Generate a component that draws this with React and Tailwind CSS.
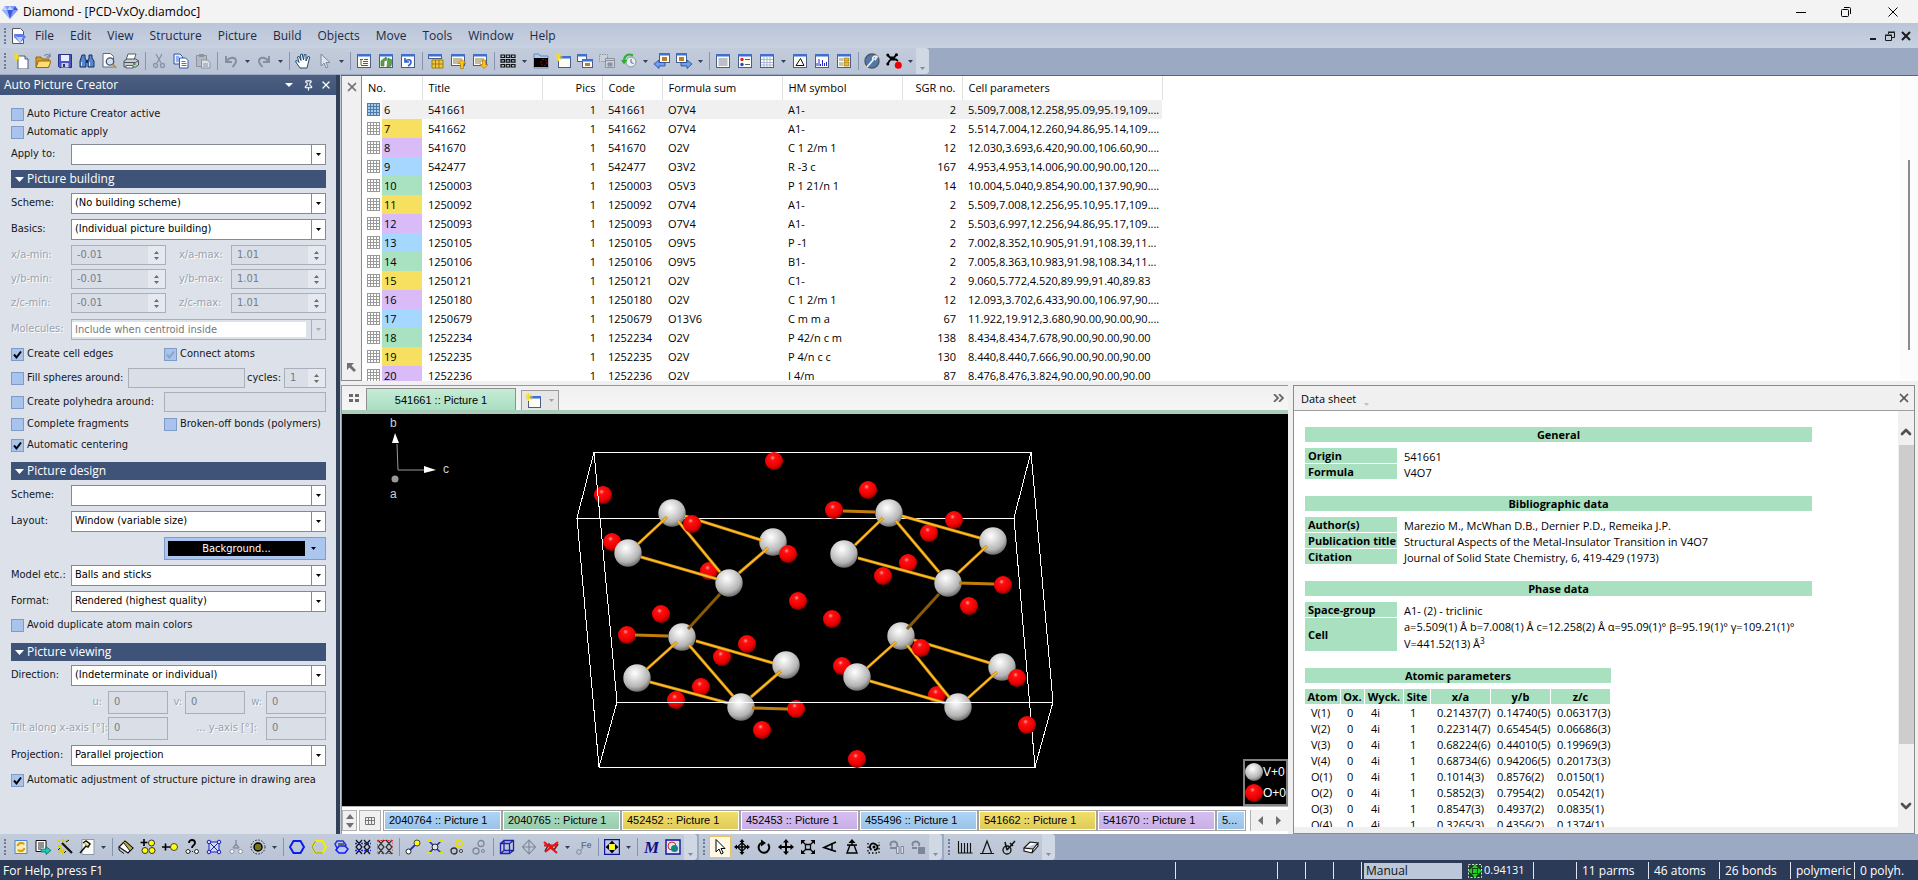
import { X, ChevronUp, ChevronDown, Pin } from "lucide-react";

const ui = "font-['Open_Sans','Noto_Sans',sans-serif]";
const dlg = "font-['DejaVu_Sans_Condensed','DejaVu_Sans',sans-serif]";

/* little window frame, used by many of the icons */
function Win({ children, x = 1, y = 2, w = 14, h = 12 }) {
  return (
    <>
      <rect x={x + 0.5} y={y + 0.5} width={w - 1} height={h - 1} fill="#fdfdf6" stroke="#4a5d86" />
      <rect x={x} y={y} width={w} height="2.5" fill="#3f6fd0" />
      {children}
    </>
  );
}

const star = (
  <path d="M3.500 0v8M0 4h7.500M1 1l5.500 6M6.500 1L1 7" stroke="#f2dc30" strokeWidth="1.100" />
);
const atomRow = (c) => (
  <g fill="#fff" stroke={c}>
    <circle cx="4" cy="12.500" r="2" />
    <circle cx="12.500" cy="12.500" r="2" />
  </g>
);
const hexPts = "4.5,2 11.5,2 15,8 11.5,14 4.5,14 1,8";

const icons = {
  new: (
    <>
      <path d="M5 3h7l3 3v10H5z" fill="#fff" stroke="#4b5878" />
      <path d="M12 3v3h3" fill="#cdd6ea" stroke="#4b5878" />
      {star}
    </>
  ),
  open: (
    <>
      <path d="M1 4h5l1 2h7v8H1z" fill="#d49a2c" stroke="#96690e" />
      <path d="M3.500 8H16l-2.500 6.500H1z" fill="#ffdc74" stroke="#96690e" />
      <path d="M9 3c2-2 4-2 5.500 0M15 0.500V4h-3.500" fill="none" stroke="#5d6e92" />
    </>
  ),
  save: (
    <>
      <path d="M1.500 1.500h13v13h-12l-1-1z" fill="#4b57c4" stroke="#2a3080" />
      <rect x="4" y="2" width="8" height="6" fill="#e8ecfb" />
      <rect x="4.500" y="10" width="7" height="4.500" fill="#c9cde2" />
      <rect x="6" y="11" width="2" height="3" fill="#2a3080" />
    </>
  ),
  find: (
    <>
      <path d="M3 2h3v3l1 2v7H1V8z" fill="#5b86cc" stroke="#123264" />
      <path d="M10 2h3v3l2 3v6H9V7l1-2z" fill="#5b86cc" stroke="#123264" />
      <path d="M7 7h2v3H7z" fill="#123264" />
      <path d="M2.500 9v4M10.500 9v4" stroke="#cfe0fb" />
    </>
  ),
  preview: (
    <>
      <path d="M2 0.500h7.500l3 3V14H2z" fill="#fff" stroke="#5c6883" />
      <circle cx="9" cy="8.500" r="3.700" fill="#cfe2f5" stroke="#4a5468" strokeWidth="1.300" />
      <path d="M11.800 11.500L15 15" stroke="#c9932b" strokeWidth="2.200" />
    </>
  ),
  print: (
    <>
      <path d="M5 1h8l-2 6H3z" fill="#fff" stroke="#59606c" />
      <path d="M1 8l3-2h9l2.500 2v4l-3 2H1z" fill="#c8ccd0" stroke="#4d545e" />
      <path d="M1 9.500h11.500l3-2" fill="none" stroke="#4d545e" />
      <path d="M3 12.500h7v2.500H3z" fill="#f4f4f4" stroke="#59606c" />
      <path d="M10 11h2.500" stroke="#23b523" strokeWidth="2" />
    </>
  ),
  cut: (
    <g fill="none" stroke="#8a93a5" strokeWidth="1.300">
      <path d="M5 1l5 9M11 1l-5 9" />
      <circle cx="4.500" cy="12.500" r="2" />
      <circle cx="11.500" cy="12.500" r="2" />
    </g>
  ),
  copy: (
    <>
      <path d="M1 1h6l2.500 2.500V11H1z" fill="#e7efff" stroke="#2e58b4" />
      <path d="M6.500 5h6L15 7.500V15H6.500z" fill="#fff" stroke="#2e58b4" />
      <path d="M3 4h3M3 6h3M3 8h3M8.500 8.500h4M8.500 10.500h5M8.500 12.500h5" stroke="#3f73dc" />
    </>
  ),
  paste: (
    <>
      <path d="M1.500 2.500h10v11h-10z" fill="#b3bac6" stroke="#8b93a1" />
      <path d="M4 1h5v3H4z" fill="#8b93a1" />
      <path d="M6.500 7h6l2.500 2.500V15H6.500z" fill="#dde1e8" stroke="#8b93a1" />
      <path d="M8 11h5M8 13h5" stroke="#8b93a1" />
    </>
  ),
  undo: <path d="M3 3v6h6M3.500 8.500C6 4 12 3.500 13 7.500c.5 2.500-1.500 4-3.500 6.500" fill="none" stroke="#858d9e" strokeWidth="1.900" />,
  redo: <path d="M13 3v6H7M12.500 8.500C10 4 4 3.500 3 7.500c-.5 2.500 1.500 4 3.500 6.500" fill="none" stroke="#858d9e" strokeWidth="1.900" />,
  hand: (
    <path d="M5 15L1.500 10l-1-2 1.500-.5 2 2L2.500 4l1.500-.8L6 7.500 5.500 1.500 7.200 1 8.500 7l.8-5.500 1.700.2L11 8l2-4.500 1.700.5L13 11l-1 4z" fill="#fff" stroke="#20486c" />
  ),
  pick: <path d="M4 1v12l3-3 2 5 2-1-2-4.500h4z" fill="#dfe3ec" stroke="#7f899e" />,
  winTree: <Win y={1} h={14}><path d="M4 6.500h3M7 8.500h5M7 10.500h5M8 6.500h4M5 7v5M5 12.500h7" fill="none" stroke="#4c6a30" /></Win>,
  winGo: <Win y={1} h={14}><path d="M3 13V8l5-4 1 3-3 1v5zM10 5l4 2-1 6-4 1z" fill="#4ea93b" stroke="#5a6f5a" strokeWidth=".7" /></Win>,
  winUndo: <Win y={1} h={14}><path d="M5 5v4h4M5.500 8.500C7 6 11 6 11 9c0 2-1 3-3 4" fill="none" stroke="#2f5fd0" strokeWidth="1.600" /></Win>,
  tableHi: (
    <>
      <Win x={0} y={1} w={14} h={5} />
      <path d="M4 7h11v8H4z" fill="#f3c93c" stroke="#9b7b15" />
      <path d="M7.500 7v8M11 7v8M4 11h11" stroke="#9b7b15" />
    </>
  ),
  rowUp: (
    <>
      <Win y={1} h={12}><path d="M3 6h9M3 8h9M3 10h6" stroke="#8b7d40" /></Win>
      <path d="M12 6.500l4 4h-2.500v5h-3v-5H8z" fill="#ffc21c" stroke="#a9770a" strokeWidth=".7" />
    </>
  ),
  rowDown: (
    <>
      <Win y={1} h={12}><path d="M3 6h9M3 8h9M3 10h6" stroke="#8b7d40" /></Win>
      <path d="M12 15.500l4-4h-2.500V7h-3v4.500H8z" fill="#ffc21c" stroke="#a9770a" strokeWidth=".7" />
    </>
  ),
  thumbs: (
    <g fill="none" stroke="#111" strokeWidth="1.200">
      <path d="M1 2h3.500v2.500H1zM6.300 2h3.500v2.500H6.300zM11.500 2H15v2.500h-3.500zM1 6.700h3.500v2.500H1zM6.300 6.700h3.500v2.500H6.300zM11.500 6.700H15v2.500h-3.500zM1 11.500h3.500V14H1zM6.300 11.500h3.500V14H6.300zM11.500 11.500H15V14h-3.500z" />
    </g>
  ),
  picFolder: (
    <>
      <path d="M1 1h5l1 2h8v12H1z" fill="#aecbf2" stroke="#6f8bb8" />
      <path d="M1 5h14v9H1z" fill="#000" />
      <circle cx="11" cy="9.500" r="3" fill="none" stroke="#d21010" strokeDasharray="2 1" />
    </>
  ),
  picNew: <><Win x={3} y={3} w={13} h={12} />{star}</>,
  picCopy: (
    <>
      <Win x={0} y={1} w={10} h={8} />
      <Win x={5} y={6} w={11} h={9}><path d="M8 10h5v3H8z" fill="#b9802a" /></Win>
    </>
  ),
  picPaste: (
    <g fill="#ccd1d9" stroke="#8b93a1">
      <path d="M.5 1.500h8v7h-8z" strokeDasharray="1.500 1" />
      <path d="M6.500 7.500h9v7h-9zM6.500 5.500h9v2h-9z" />
      <path d="M9 10h4v3H9z" fill="#8b93a1" />
    </g>
  ),
  history: (
    <>
      <circle cx="10" cy="9" r="5" fill="#e8edf2" stroke="#8694a4" />
      <path d="M10 6v3.500l2.500 1" fill="none" stroke="#5b6878" />
      <path d="M12 2.500C7 0 3 3 3 8" fill="none" stroke="#2fae2f" strokeWidth="2" />
      <path d="M0 7h6.500L3 11.500z" fill="#2fae2f" />
    </>
  ),
  picPrev: (
    <>
      <Win x={5} y={0} w={11} h={10}><path d="M8 4h5v4H8z" fill="#b9802a" /></Win>
      <path d="M0 11l5-4v2.500h6v3.500H5v2.500z" fill="#6fa0f0" stroke="#21479c" strokeWidth=".8" />
    </>
  ),
  picNext: (
    <>
      <Win x={0} y={0} w={11} h={10}><path d="M3 4h5v4H3z" fill="#b9802a" /></Win>
      <path d="M16 11l-5-4v2.500H5v3.500h6v2.500z" fill="#6fa0f0" stroke="#21479c" strokeWidth=".8" />
    </>
  ),
  winText: <Win y={1} h={14}><path d="M3.500 6h9M3.500 8h9M3.500 10h9M3.500 12h9" stroke="#77809a" /></Win>,
  winProps: (
    <Win y={1} h={14}>
      <path d="M8 6.500h5M8 11.500h5" stroke="#55607c" />
      <circle cx="5" cy="6.500" r="1.700" fill="#e02020" />
      <circle cx="5" cy="11.500" r="1.700" fill="#2343c8" />
    </Win>
  ),
  winGrid: <Win y={1} h={14}><path d="M2 6.500h12M2 9.500h12M2 12h12M5 4v10M8 4v10M11 4v10" stroke="#a9b6d4" /></Win>,
  winTri: <Win y={1} h={14}><path d="M4 12.500L8.500 5.500l3.500 7z" fill="none" stroke="#111" /></Win>,
  winPowder: <Win y={1} h={14}><path d="M3 13v-3M5 13V6M6.500 13v-2M8.500 13V7M10.500 13v-3M12.500 13V9" stroke="#2226d0" /></Win>,
  winTable: (
    <Win y={1} h={14}>
      <path d="M3 5h4v3H3zM3 9h4v4H3z" fill="#c6c6b0" />
      <path d="M8 5h5v3H8zM8 9h5v4H8z" fill="#eeb62c" stroke="#6e5a18" strokeWidth=".5" />
    </Win>
  ),
  povray: (
    <>
      <circle cx="8" cy="8" r="7" fill="#4f79a8" stroke="#50585f" strokeWidth="1.400" />
      <path d="M3 14L9 7c-1-3 2-5 4-3l-2 2 1 1" fill="none" stroke="#e9eef4" strokeWidth="1.800" />
    </>
  ),
  video: (
    <>
      <path d="M1.500 2l3 3M10.500 1L8 5M1.500 11L4 7M4 4.500h5M4 6.500h6l2 1.500" fill="none" stroke="#000" strokeWidth="1.800" />
      <circle cx="1.800" cy="2" r="1.500" /><circle cx="10.500" cy="1.800" r="1.500" /><circle cx="1.800" cy="11" r="1.500" />
      <circle cx="12.300" cy="12.300" r="3.500" fill="#e00" />
    </>
  ),

  refresh: (
    <>
      <path d="M2 1.500h12v13H2z" fill="#f8efc0" stroke="#4a86d8" />
      <path d="M4.500 7c1-4 6-3.500 6.500-1.500M11.500 9c-1 4-6 3.500-6.500 1.500" fill="none" stroke="#e39a00" strokeWidth="1.900" />
    </>
  ),
  apply: (
    <>
      <path d="M1 1.500h10v11H1z" fill="#fff" stroke="#111" />
      <path d="M3 4h6M3 6h6M3 8h6M3 10h3" stroke="#222" />
      <path d="M6 10h5V7.500l5 4-5 4V13H6z" fill="#1cc6c6" stroke="#064" strokeWidth=".7" />
    </>
  ),
  wizard: (
    <>
      <path d="M5 4l10 10" stroke="#111" strokeWidth="2.200" />
      <path d="M1 1l2 2M6 0v3M1 7h3M8 3l2-2M2 14l2-4 2 4 1-4" fill="none" stroke="#dcd000" strokeWidth="1.800" />
      <path d="M9 3l3-2M3 9l-2 2M7 14l2-2" stroke="#111" />
    </>
  ),
  hammer: (
    <>
      <path d="M3 .5h12v15H3z" fill="#fbfbf6" stroke="#8b97ae" />
      <path d="M4 4l3-2 4 3-2 3-2-1-6 7" fill="none" stroke="#111" strokeWidth="1.500" />
      <path d="M5 4l4 3" stroke="#c9c000" strokeWidth="1.200" />
    </>
  ),
  eraser: (
    <>
      <path d="M1 8l6-6 8 7-5 5z" fill="#fff" stroke="#111" strokeWidth="1.200" />
      <path d="M5.500 3.500L7 2l8 7-3 3z" fill="#b9ae3c" stroke="#111" />
      <path d="M1 8v3l5 3.500" fill="none" stroke="#111" />
    </>
  ),
  addAtoms: (
    <g fill="#ff0" stroke="#333">
      <circle cx="11.500" cy="4" r="3" />
      <circle cx="5" cy="11.500" r="3" />
      <circle cx="12" cy="11.500" r="3" />
      <path d="M4 0v7M.5 3.500h7" stroke="#000" strokeWidth="1.600" />
    </g>
  ),
  addAtom: (
    <>
      <path d="M3.500 4.500v7M0 8h9" stroke="#000" strokeWidth="1.600" />
      <circle cx="12" cy="8" r="3.500" fill="#ff0" stroke="#444" />
    </>
  ),
  whichAtom: (
    <>
      <path d="M5 4c0-4 6-4 6 0 0 2.500-3 2-3 5" fill="none" stroke="#000" strokeWidth="1.800" />
      {atomRow("#222")}
      <path d="M6 12.500h4.500" stroke="#222" strokeDasharray="1 1" />
    </>
  ),
  fillCell: (
    <g fill="#cfd8f4" stroke="#2222b8">
      <path d="M3 3h10v10H3zM3 3l10 10M13 3L3 13" />
      <circle cx="3" cy="3" r="1.800" /><circle cx="13" cy="3" r="1.800" />
      <circle cx="3" cy="13" r="1.800" /><circle cx="13" cy="13" r="1.800" />
    </g>
  ),
  fragment: (
    <>
      <path d="M8 1v4M8 5L5 9M8 5l3 4M5 9h6" fill="none" stroke="#8a92a2" strokeWidth="1.500" />
      {atomRow("#8a92a2")}
    </>
  ),
  sphere: (
    <>
      <circle cx="8" cy="8" r="4" fill="#77731c" stroke="#000" strokeWidth="1.400" />
      <circle cx="8" cy="8" r="7" fill="none" stroke="#222" strokeDasharray="1.500 1.500" />
    </>
  ),
  hexBlue: <polygon points={hexPts} fill="none" stroke="#0b1ef0" strokeWidth="2" />,
  hexYellow: (
    <>
      <polygon points={hexPts} fill="none" stroke="#f4ee00" strokeWidth="2.200" />
      <path d="M11.500 14h-7L1 8l3.500-6" fill="none" stroke="#8a8a5a" />
    </>
  ),
  hexStack: (
    <>
      <path d="M4 2h6l3 4-3 3H4L2 5z" fill="none" stroke="#2430d8" strokeWidth="1.500" />
      <path d="M6 7h6l3 3-3 4H6l-3-3z" fill="#b9c3f5" stroke="#0b1ef0" strokeWidth="1.500" />
      <path d="M5 5h6" stroke="#444" strokeWidth="1.500" />
    </>
  ),
  packBlue: (
    <>
      <path d="M1 1l6 7-6 7M7 1L1 8l6 7M9 1l6 7-6 7M15 1L9 8l6 7" fill="none" stroke="#111" strokeWidth="1.200" />
      <path d="M0 4.500h16M0 11.500h16" stroke="#1b22e4" strokeWidth="1.400" strokeDasharray="2 1" />
    </>
  ),
  packRed: (
    <>
      <path d="M1 1l6 7-6 7M7 1L1 8l6 7M9 1l6 7-6 7M15 1L9 8l6 7" fill="none" stroke="#333" strokeWidth="1.200" />
      <path d="M0 1.500h16v13H0z" fill="none" stroke="#e02020" strokeDasharray="2 1.500" />
    </>
  ),
  bond: (
    <>
      <path d="M4 12l8-8" stroke="#2233aa" strokeWidth="1.800" />
      <circle cx="12" cy="4" r="3" fill="#ff0" stroke="#444" />
      <circle cx="3.500" cy="12.500" r="2.500" fill="#fff" stroke="#222" />
    </>
  ),
  coord: (
    <>
      <path d="M2 2l12 12M14 2L2 14" stroke="#2233aa" strokeWidth="1.600" />
      <circle cx="8" cy="8" r="3" fill="#dfe4f4" stroke="#222" />
      <path d="M0 2h4M12 2h4M0 14h4M12 14h4" stroke="#e8e000" strokeWidth="2" />
    </>
  ),
  ringA: (
    <>
      <circle cx="10" cy="4.500" r="3.200" fill="none" stroke="#e6df00" strokeWidth="1.600" />
      <circle cx="5" cy="12" r="3" fill="none" stroke="#333" strokeWidth="1.300" />
      <circle cx="12" cy="12" r="1.500" fill="#fff" stroke="#333" />
    </>
  ),
  ringB: (
    <>
      <circle cx="10" cy="4.500" r="3" fill="none" stroke="#7e8798" strokeWidth="1.300" />
      <circle cx="5" cy="12" r="3" fill="none" stroke="#7e8798" strokeWidth="1.300" />
      <circle cx="12" cy="12" r="1.500" fill="none" stroke="#7e8798" />
    </>
  ),
  cell: <path d="M1.500 4.500h9v10h-9zM5 1.500h9.500v10H5zM1.500 4.500L5 1.500M10.500 4.500l4-3M1.500 14.500l3.500-3M10.500 14.500l4-3" fill="none" stroke="#1b22a8" strokeWidth="1.300" />,
  poly: <path d="M8 1l6.500 7L8 15 1.500 8zM8 1v14M1.500 8h13" fill="none" stroke="#7e8798" strokeWidth="1.100" />,
  del: (
    <>
      <path d="M2 12l4-7 5 6 4-6" fill="none" stroke="#333" strokeWidth="1.500" />
      <path d="M1 3l13 11M15 3L2 13M1 6.500h13" stroke="#f01010" strokeWidth="2.200" />
    </>
  ),
  label: (
    <>
      <circle cx="3" cy="13" r="2.300" fill="none" stroke="#8089a0" />
      <path d="M5 11l2-2" stroke="#8089a0" />
      <text x="5" y="9" fontSize="9" fontWeight="700" fill="#6d7688" fontFamily="Liberation Sans">Fe</text>
    </>
  ),
  fit: (
    <>
      <path d="M.5 .5h15v15H.5z" fill="#bcc7e6" stroke="#10109a" strokeWidth="1.400" />
      <path d="M8 1.500l3 3.500H5zM8 14.500l3-3.500H5zM1.500 8L5 5v6zM14.500 8L11 5v6z" fill="#000" />
      <circle cx="8" cy="8" r="3" fill="#ff0" />
    </>
  ),
  measure: <text x="1" y="14" fontSize="17" fontWeight="700" fontStyle="italic" fill="#10108a" fontFamily="Liberation Serif">M</text>,
  render: (
    <>
      <path d="M1 1h14v14H1z" fill="#dfe6f2" stroke="#10109a" strokeWidth="1.400" />
      <circle cx="7" cy="7" r="4" fill="none" stroke="#e02020" />
      <circle cx="9.500" cy="9.500" r="3.500" fill="#13857c" />
    </>
  ),
  arrow: <path d="M4 .5v12.500l3-3 2.200 5 2-1-2.200-4.500h4z" fill="#fff" stroke="#000" />,
  spinXY: (
    <>
      <path d="M8 1v14M1 8h14" stroke="#000" strokeWidth="1.600" />
      <path d="M8 3.500l4.500 4.500L8 12.500 3.500 8z" fill="none" stroke="#000" strokeWidth="1.200" />
      <path d="M8 0l2.500 3h-5zM8 16l2.500-3h-5zM0 8l3-2.500v5zM16 8l-3-2.500v5z" />
    </>
  ),
  spinZ: (
    <>
      <path d="M5 4a5.300 5.300 0 1 0 7 1" fill="none" stroke="#000" strokeWidth="2" />
      <path d="M5 .5L10 4l-5 3.500z" />
    </>
  ),
  shift: (
    <>
      <path d="M8 2v12M2 8h12" stroke="#000" strokeWidth="2" />
      <path d="M8 0l3 3.500H5zM8 16l3-3.500H5zM0 8l3.500-3v6zM16 8l-3.500-3v6z" />
    </>
  ),
  zoom: (
    <>
      <path d="M5.500 5.500h5v5h-5zM2 2l4 4M14 2l-4 4M2 14l4-4M14 14l-4-4" fill="none" stroke="#000" strokeWidth="1.300" />
      <path d="M1 1h4.500L1 5.500zM15 1v4.500L10.500 1zM1 15v-4.500L5.500 15zM15 15h-4.500l4.500-4.500z" />
    </>
  ),
  persp: (
    <>
      <path d="M14 3L2 8.500l12 4" fill="none" stroke="#000" strokeWidth="1.800" />
      <path d="M10 4v8" stroke="#000" strokeWidth="1.500" />
    </>
  ),
  walk: (
    <>
      <path d="M8 1v6M3 14l3-8h4l3 8zM3 6h10" fill="none" stroke="#000" strokeWidth="1.400" />
      <path d="M8 0l3.500 4h-7z" />
    </>
  ),
  lasso: (
    <>
      <path d="M5.500 11C2 8 5 3 9 5s3 6-1 6" fill="none" stroke="#000" strokeWidth="1.700" />
      <path d="M2 4v10h11V3" fill="none" stroke="#000" strokeDasharray="1.500 2" strokeWidth="1.300" />
      <circle cx="8" cy="8" r="1.500" />
    </>
  ),
  grayA: (
    <>
      <path d="M3 7c-3-6 8-6 6 0M2 9h7" fill="none" stroke="#7e8798" strokeWidth="2" />
      <path d="M8.500 7.500h2.500v7H8.500zM13 7.500h2.500v7H13z" fill="#dce0e8" stroke="#7e8798" />
    </>
  ),
  grayB: (
    <>
      <path d="M3 7c-3-6 8-6 6 0M2 9h5" fill="none" stroke="#7e8798" strokeWidth="2" />
      <path d="M8 8h7v7H8z" fill="#7e8798" />
    </>
  ),
  dist: <path d="M1.500 2v12.500M1 14h14.500M4.500 4v10M7.500 4v10M10.500 4v10M13.500 4v10" fill="none" stroke="#111" strokeWidth="1.100" />,
  angle: <path d="M1 14.500h14M3.500 14L8 2l4.500 12" fill="none" stroke="#111" strokeWidth="1.200" />,
  torsion: (
    <>
      <circle cx="6" cy="11" r="4" fill="none" stroke="#111" strokeWidth="1.300" />
      <path d="M6 11L4 3M6 11l8-9M9 4l3 3" fill="none" stroke="#111" strokeWidth="1.500" />
    </>
  ),
  planes: (
    <path d="M1 9l6-6 8 1-5 6zM1 9v3l8 2 6-7V4M10 10l-1 4" fill="#fff" stroke="#111" strokeWidth="1.100" />
  ),
};

function Icon({ name, className = "size-4" }) {
  return (
    <svg viewBox="0 0 16 16" className={className} aria-hidden="true">
      {icons[name]}
    </svg>
  );
}

function Tri({ className = "text-[#333f5a]" }) {
  return (
    <svg viewBox="0 0 5 3" className={"w-[5px] h-[3px] " + className} aria-hidden="true">
      <path d="M0 0h5L2.500 3z" fill="currentColor" />
    </svg>
  );
}

function Grip() {
  return <div className="w-[2px] h-4 mx-1 self-center border-l-2 border-dotted border-[#6d7b96]" />;
}

/* "|" draws a separator, "v" the small drop-down arrow */
function Toolbar({ items, active, label }) {
  return (
    <div role="toolbar" aria-label={label} className="flex h-[26px] bg-linear-to-b from-[#c3ccdb] to-[#b9c4d6] rounded-r">
      <Grip />
      {items.map((it, i) => {
        if (it === "|")
          return <div key={i} className="w-[6px] py-1 flex justify-center"><div className="w-px bg-[#8794ae]" /></div>;
        if (it === "v")
          return (
            <button key={i} aria-label="More" className="w-[11px] flex items-center justify-center">
              <Tri />
            </button>
          );
        return (
          <button
            key={i}
            aria-label={it}
            className={
              "w-[22px] flex items-center justify-center " +
              (it === active ? "bg-[#fff8e4] border border-[#e5c365] my-[2px]" : "")
            }
          >
            <Icon name={it} />
          </button>
        );
      })}
      <button aria-label="Toolbar options" className="w-[13px] flex items-end justify-center pb-1 bg-[#d0d8e4] rounded-r">
        <Tri className="text-[#7f8ca6]" />
      </button>
    </div>
  );
}

const mainTools = [
  "new", "open", "save", "find", "preview", "print", "|", "cut", "copy", "paste", "|",
  "undo", "v", "redo", "v", "|", "hand", "pick", "v", "|", "winTree", "winGo", "winUndo", "|",
  "tableHi", "rowUp", "rowDown", "|", "thumbs", "v", "picFolder", "picNew", "picCopy", "picPaste", "history", "v",
  "picPrev", "picNext", "v", "|", "winText", "winProps", "winGrid", "v", "winTri", "winPowder", "winTable", "|",
  "povray", "video", "v",
];
const buildTools = [
  "refresh", "apply", "wizard", "hammer", "v", "|", "eraser", "addAtoms", "addAtom", "whichAtom", "fillCell", "fragment", "sphere", "v", "|",
  "hexBlue", "hexYellow", "hexStack", "packBlue", "packRed", "|", "bond", "coord", "ringA", "ringB", "|",
  "cell", "poly", "del", "v", "label", "|", "fit", "v", "|", "measure", "render",
];
const moveTools = ["arrow", "spinXY", "spinZ", "shift", "zoom", "persp", "walk", "lasso", "grayA", "grayB"];
const measureTools = ["dist", "angle", "torsion", "planes"];

function Gem({ className }) {
  return (
    <svg viewBox="0 0 16 16" className={className} aria-hidden="true">
      <path d="M3 2h10l3 4-8 9-8-9z" fill="#7f9cf4" />
      <path d="M3 2l2 4H0zM8 2l3 4H5z" fill="#c3d2ff" />
      <path d="M13 2l3 4h-5zM5 6h6l-3 9z" fill="#4058d8" />
      <path d="M0 6h5l3 9z" fill="#91b4ff" />
    </svg>
  );
}

function TitleBar() {
  return (
    <header className="flex items-center h-[23px] shrink-0 bg-[#f3f3f3] text-[12px] text-black">
      <Gem className="w-4 h-4 ml-[2px] mr-[5px]" />
      <h1>Diamond - [PCD-VxOy.diamdoc]</h1>
      <div className="ml-auto flex h-full text-black">
        <button aria-label="Minimize" className="w-[45px] flex items-center justify-center">
          <svg viewBox="0 0 10 10" className="size-[10px]"><path d="M0 5.500h10" stroke="currentColor" /></svg>
        </button>
        <button aria-label="Restore" className="w-[45px] flex items-center justify-center">
          <svg viewBox="0 0 10 10" className="size-[10px]" fill="none" stroke="currentColor">
            <rect x=".5" y="2.500" width="7" height="7" rx="1" /><path d="M3 .5h5.500a1 1 0 0 1 1 1V7" />
          </svg>
        </button>
        <button aria-label="Close" className="w-[50px] flex items-center justify-center">
          <svg viewBox="0 0 10 10" className="size-[10px]"><path d="M.5 .5l9 9M9.500 .5l-9 9" stroke="currentColor" /></svg>
        </button>
      </div>
    </header>
  );
}

const menus = ["File", "Edit", "View", "Structure", "Picture", "Build", "Objects", "Move", "Tools", "Window", "Help"];

function MenuBar() {
  return (
    <nav className="flex items-center h-[25px] shrink-0 bg-linear-to-b from-[#b9c5d9] to-[#c8d1e0] text-[12px] text-[#1f2a44]">
      <Grip />
      <svg viewBox="0 0 16 16" className="size-4 mr-px" aria-hidden="true">
        <path d="M2.500 .5h8l3 3v12h-11z" fill="#fff" stroke="#555" />
        <path d="M4 6h9l3 3-6 6-6-6z" fill="#5b7be8" /><path d="M4 6l3 3h6l-3 6z" fill="#b9cbff" />
      </svg>
      {menus.map((m) => (
        <button key={m} className="px-2 h-full">{m}</button>
      ))}
      <div className="ml-auto mr-[6px] flex gap-1 text-[#1a1a1a]">
        <button aria-label="Minimize document" className="size-3">
          <svg viewBox="0 0 12 12"><path d="M2 9h6" stroke="currentColor" strokeWidth="2" /></svg>
        </button>
        <button aria-label="Restore document" className="size-3">
          <svg viewBox="0 0 12 12" fill="none" stroke="currentColor"><path d="M4.500 4V2.500h6v5H8M4 2h7M1.500 5.500h6v5h-6zM1 5h7" /></svg>
        </button>
        <button aria-label="Close document" className="size-3">
          <svg viewBox="0 0 12 12"><path d="M2 2l8 8M10 2l-8 8" stroke="currentColor" strokeWidth="2" /></svg>
        </button>
      </div>
    </nav>
  );
}

/* ---------- left dock ---------- */

function Check({ id, label, checked, disabled }) {
  return (
    <div className="flex items-center h-[13px]">
      <span className="relative size-[13px] shrink-0">
        <input
          id={id}
          type="checkbox"
          defaultChecked={checked}
          disabled={disabled}
          className="peer block appearance-none size-[13px] bg-[#a9c4ec] border border-[#7f9cc8]"
        />
        {checked && (
          <svg viewBox="0 0 13 13" className={"absolute inset-0 pointer-events-none " + (disabled ? "text-[#8ba3c4]" : "text-black")}>
            <path d="M3 6.500l2.500 3 4.500-6" fill="none" stroke="currentColor" strokeWidth="2" />
          </svg>
        )}
      </span>
      <label htmlFor={id} className="pl-[3px] whitespace-nowrap">{label}</label>
    </div>
  );
}

const off = "text-[#9aa1ad] [text-shadow:1px_1px_#fff]";

function Combo({ id, label, value, disabled, className = "mt-[5px]" }) {
  return (
    <div className={"flex items-center h-[21px] " + className}>
      <label htmlFor={id} className={"w-[60px] shrink-0 whitespace-nowrap " + (disabled ? off : "")}>{label}</label>
      <div className={"relative flex-1 h-full border flex " + (disabled ? "bg-[#dde2ea] border-[#a9afb9]" : "bg-white border-[#848a94]")}>
        <select
          id={id}
          disabled={disabled}
          className={"appearance-none flex-1 px-[3px] outline-none disabled:opacity-100 bg-white " + (disabled ? "text-[#777] my-[2px] mr-[5px]" : "text-black")}
        >
          <option>{value}</option>
        </select>
        <span className={"w-[14px] border-l flex items-center justify-center pointer-events-none " + (disabled ? "border-[#a9afb9]" : "border-[#848a94]")}>
          <Tri className={disabled ? "text-[#aaa]" : "text-black"} />
        </span>
      </div>
    </div>
  );
}

function Spin({ id, value, className }) {
  return (
    <div className={"flex h-5 border border-[#a9afb9] bg-[#d9dee7] " + className}>
      <input id={id} disabled defaultValue={value} className="w-0 min-w-0 flex-1 pl-[5px] text-[#777d88]" />
      <span className="w-[17px] shrink-0 flex flex-col items-center justify-center gap-[3px] bg-[#e6e9ef]">
        <svg viewBox="0 0 5 3" className="w-[5px] h-[3px] text-[#6d6d6d]"><path d="M0 3h5L2.500 0z" fill="currentColor" /></svg>
        <Tri className="text-[#6d6d6d]" />
      </span>
    </div>
  );
}

function Section({ children, className }) {
  return (
    <h3 className={"h-[18px] bg-[#3f5379] text-white text-[12px] leading-[18px] flex items-center pl-1 gap-[3px] " + ui + " " + className}>
      <svg viewBox="0 0 9 5" className="w-[9px] h-[5px]"><path d="M0 0h9L4.500 5z" fill="currentColor" /></svg>
      {children}
    </h3>
  );
}

function Small({ id, label, labelClass }) {
  return (
    <>
      <label htmlFor={id} className={off + " shrink-0 text-right whitespace-nowrap " + labelClass}>{label}</label>
      <input id={id} disabled defaultValue="0" className="w-[60px] h-[23px] border border-[#a9afb9] bg-[#d9dee7] text-[#777d88] px-[5px] pb-[3px]" />
    </>
  );
}

const ranges = [["x/a", "mt-[5px]"], ["y/b", "mt-1"], ["z/c", "mt-1"]];

function PictureCreator() {
  return (
    <aside className="w-[340px] shrink-0 flex flex-col border-r-4 border-[#2f4058] bg-[#dde2ea]">
      <div className="h-5 shrink-0 flex items-center bg-linear-to-b from-[#4d6082] to-[#3f5379] text-white text-[12px] pl-1 pr-1">
        <h2>Auto Picture Creator</h2>
        <button aria-label="Options" className="ml-auto mr-[10px]">
          <svg viewBox="0 0 8 4" className="w-2 h-1"><path d="M0 0h8L4 4z" fill="currentColor" /></svg>
        </button>
        <button aria-label="Pin" className="mr-[6px]"><Pin size={11} strokeWidth={2.500} /></button>
        <button aria-label="Close panel"><X size={12} strokeWidth={2.500} /></button>
      </div>
      <div className={"pl-[11px] pr-[10px] pt-[13px] text-[11px] text-[#14161c] " + dlg}>
        <Check id="active" label="Auto Picture Creator active" />
        <div className="h-[5px]" />
        <Check id="auto" label="Automatic apply" />
        <Combo id="apply" label="Apply to:" value="" />

        <Section className="mt-[5px]">Picture building</Section>
        <Combo id="bscheme" label="Scheme:" value="(No building scheme)" />
        <Combo id="basics" label="Basics:" value="(Individual picture building)" />
        {ranges.map(([r, mt]) => (
          <div key={r} className={"flex items-center whitespace-nowrap " + mt}>
            <label htmlFor={r + "min"} className={"w-[60px] shrink-0 " + off}>{r}-min:</label>
            <Spin id={r + "min"} value="-0.01" className="w-[95px] shrink-0" />
            <label htmlFor={r + "max"} className={"ml-[13px] w-[52px] shrink-0 " + off}>{r}-max:</label>
            <Spin id={r + "max"} value="1.01" className="flex-1 min-w-0" />
          </div>
        ))}
        <Combo id="mol" label="Molecules:" value="Include when centroid inside" disabled className="mt-[6px]" />
        <div className="flex mt-2">
          <div className="w-[153px] shrink-0"><Check id="edges" label="Create cell edges" checked /></div>
          <Check id="connect" label="Connect atoms" checked disabled />
        </div>
        <div className="flex items-center mt-[7px]">
          <div className="w-[117px] shrink-0"><Check id="fill" label="Fill spheres around:" /></div>
          <input aria-label="Fill spheres around" disabled className="h-5 w-[117px] shrink-0 border border-[#a9afb9] bg-[#d9dee7]" />
          <label htmlFor="cycles" className="pl-[2px] w-[39px] shrink-0 whitespace-nowrap">cycles:</label>
          <Spin id="cycles" value="1" className="flex-1 min-w-0" />
        </div>
        <div className="flex items-center mt-1">
          <div className="w-[153px] shrink-0"><Check id="polyh" label="Create polyhedra around:" /></div>
          <input aria-label="Create polyhedra around" disabled className="h-5 flex-1 min-w-0 border border-[#a9afb9] bg-[#d9dee7]" />
        </div>
        <div className="flex mt-[6px]">
          <div className="w-[153px] shrink-0"><Check id="frag" label="Complete fragments" /></div>
          <Check id="broken" label="Broken-off bonds (polymers)" />
        </div>
        <div className="h-2" />
        <Check id="center" label="Automatic centering" checked />

        <Section className="mt-[10px]">Picture design</Section>
        <Combo id="dscheme" label="Scheme:" value="" />
        <Combo id="layout" label="Layout:" value="Window (variable size)" />
        <div className="flex justify-end mt-[5px]">
          <button className="w-[162px] h-[23px] flex items-center bg-[#abc6ee] border border-[#7f9cc8] p-[3px] text-white">
            <span className="flex-1 h-[15px] leading-[15px] bg-black">Background...</span>
            <span className="w-[17px] flex justify-center"><Tri className="text-black" /></span>
          </button>
        </div>
        <Combo id="model" label="Model etc.:" value="Balls and sticks" />
        <Combo id="format" label="Format:" value="Rendered (highest quality)" />
        <div className="h-[7px]" />
        <Check id="avoid" label="Avoid duplicate atom main colors" />

        <Section className="mt-[11px]">Picture viewing</Section>
        <Combo id="dir" label="Direction:" value="(Indeterminate or individual)" className="mt-1" />
        <div className="flex items-center mt-[5px]">
          <Small id="u" label="u:" labelClass="w-[97px] pr-[6px]" />
          <Small id="v" label="v:" labelClass="w-[17px] pr-[3px]" />
          <Small id="w" label="w:" labelClass="w-[21px] pr-[4px]" />
        </div>
        <div className="flex items-center mt-[3px]">
          <Small id="tx" label="Tilt along x-axis [°]:" labelClass="w-[97px] flex justify-end" />
          <Small id="ty" label="... y-axis [°]:" labelClass="w-[98px] pr-[9px]" />
        </div>
        <Combo id="proj" label="Projection:" value="Parallel projection" />
        <div className="h-2" />
        <Check id="adjust" label="Automatic adjustment of structure picture in drawing area" checked />
      </div>
    </aside>
  );
}

/* ---------- structure list ---------- */

const Y = "bg-[#f7e05f]", P = "bg-[#d9bcf7]", B = "bg-[#a6d8ff]", G = "bg-[#a9e2c0]";

const rows = [
  [6, "bg-[#f0f0f0]", "541661", "O7V4", "A1-", "2", "5.509,7.008,12.258,95.09,95.19,109...."],
  [7, Y, "541662", "O7V4", "A1-", "2", "5.514,7.004,12.260,94.86,95.14,109...."],
  [8, P, "541670", "O2V", "C 1 2/m 1", "12", "12.030,3.693,6.420,90.00,106.60,90...."],
  [9, B, "542477", "O3V2", "R -3 c", "167", "4.953,4.953,14.006,90.00,90.00,120...."],
  [10, G, "1250003", "O5V3", "P 1 21/n 1", "14", "10.004,5.040,9.854,90.00,137.90,90...."],
  [11, Y, "1250092", "O7V4", "A1-", "2", "5.509,7.008,12.256,95.10,95.17,109...."],
  [12, P, "1250093", "O7V4", "A1-", "2", "5.503,6.997,12.256,94.86,95.17,109...."],
  [13, B, "1250105", "O9V5", "P -1", "2", "7.002,8.352,10.905,91.91,108.39,11..."],
  [14, G, "1250106", "O9V5", "B1-", "2", "7.005,8.363,10.983,91.98,108.34,11..."],
  [15, Y, "1250121", "O2V", "C1-", "2", "9.060,5.772,4.520,89.99,91.40,89.83"],
  [16, P, "1250180", "O2V", "C 1 2/m 1", "12", "12.093,3.702,6.433,90.00,106.97,90...."],
  [17, B, "1250679", "O13V6", "C m m a", "67", "11.922,19.912,3.680,90.00,90.00,90...."],
  [18, G, "1252234", "O2V", "P 42/n c m", "138", "8.434,8.434,7.678,90.00,90.00,90.00"],
  [19, Y, "1252235", "O2V", "P 4/n c c", "130", "8.440,8.440,7.666,90.00,90.00,90.00"],
  [20, P, "1252236", "O2V", "I 4/m", "87", "8.476,8.476,3.824,90.00,90.00,90.00"],
];

function GridIcon({ on }) {
  return (
    <svg viewBox="0 0 13 13" className="size-[13px] shrink-0" aria-hidden="true">
      <rect width="13" height="13" fill={on ? "#a9cdf0" : "#fff"} />
      <path d="M.5 0v13M3.500 0v13M6.500 0v13M9.500 0v13M12.500 0v13M0 .5h13M0 3.500h13M0 6.500h13M0 9.500h13M0 12.500h13" stroke={on ? "#4c7aa8" : "#999"} />
    </svg>
  );
}

function StructureList() {
  const th = "border-r border-[#e2e2e2] font-normal px-[6px] pt-0 pb-[2px]";
  return (
    <section className="h-[306px] shrink-0 flex bg-white border-t border-[#646464]">
      <div className="w-[21px] shrink-0 flex flex-col items-center justify-between py-1 bg-[#f0f0f0] border border-t-0 border-[#8c8c8c] text-[#707070]">
        <button aria-label="Close list"><X size={14} strokeWidth={3} /></button>
        <button aria-label="Undock" className="pb-1">
          <svg viewBox="0 0 9 9" className="size-[9px]"><path d="M0 0h7L4.500 2.500 9 7 7 9 2.500 4.500 0 7z" fill="currentColor" /></svg>
        </button>
      </div>
      <div className="flex-1 overflow-hidden">
        <table className="table-fixed w-[800px] border-collapse text-[11px] leading-[19px] text-black whitespace-nowrap">
          <colgroup>
            <col className="w-[60px]" /><col className="w-[120px]" /><col className="w-[60px]" /><col className="w-[60px]" />
            <col className="w-[120px]" /><col className="w-[120px]" /><col className="w-[60px]" /><col className="w-[200px]" />
          </colgroup>
          <thead>
            <tr className="h-6">
              <th className={th + " text-left"}>No.</th>
              <th className={th + " text-left"}>Title</th>
              <th className={th + " text-right"}>Pics</th>
              <th className={th + " text-left"}>Code</th>
              <th className={th + " text-left"}>Formula sum</th>
              <th className={th + " text-left"}>HM symbol</th>
              <th className={th + " text-right"}>SGR no.</th>
              <th className={th + " text-left"}>Cell parameters</th>
            </tr>
          </thead>
          <tbody>
            {rows.map(([no, color, code, sum, hm, sgr, cell]) => (
              <tr key={no} className={"h-[19px] " + (no === 6 ? "bg-[#f0f0f0]" : "")}>
                <td className="p-0">
                  <div className="flex items-center h-[19px]">
                    <span className="w-[20px] h-full pl-[5px] bg-white flex items-center"><GridIcon on={no === 6} /></span>
                    <span className={"flex-1 h-full pl-[2px] " + color}>{no}</span>
                  </div>
                </td>
                <td className="px-[6px] py-0">{code}</td>
                <td className="px-[6px] py-0 text-right">1</td>
                <td className="px-[6px] py-0">{code}</td>
                <td className="px-[6px] py-0">{sum}</td>
                <td className="px-[6px] py-0">{hm}</td>
                <td className="px-[6px] py-0 text-right">{sgr}</td>
                <td className="px-[6px] py-0">{cell}</td>
              </tr>
            ))}
          </tbody>
        </table>
      </div>
      <div className="w-[18px] shrink-0 bg-[#fcfcfc] flex flex-col items-center pt-[84px]">
        <div className="w-[2px] h-[190px] bg-[#8b8b8b]" />
      </div>
    </section>
  );
}

/* ---------- structure picture ---------- */

const oBack = [
  [432, 47], [261, 81], [270, 128], [367, 157], [319, 200], [456, 187], [285, 221], [405, 230], [380, 243],
  [359, 273], [334, 286], [454, 295], [420, 316], [526, 76], [492, 96], [612, 106], [587, 119], [566, 149], [541, 162],
  [661, 171], [627, 192], [490, 205], [500, 252], [595, 281], [685, 311], [515, 345],
];
const vAtoms = [
  [330, 99], [286, 139], [431, 128], [387, 169], [340, 223], [295, 264], [444, 251], [399, 293],
  [547, 99], [502, 140], [651, 127], [606, 169], [559, 222], [515, 263], [660, 253], [616, 293],
];
const oFront = [[350, 110], [446, 140], [579, 234], [675, 264]];
const bonds = [
  [325, 103, 296, 130], [299, 143, 375, 165], [336, 107, 378, 158], [343, 102, 419, 126], [426, 134, 397, 159],
  [335, 228, 305, 255], [354, 227, 431, 249], [347, 231, 391, 282], [439, 257, 409, 283], [308, 268, 386, 289],
  [541, 104, 513, 131], [516, 144, 593, 165], [554, 107, 597, 158], [560, 102, 638, 124], [645, 132, 616, 159],
  [554, 228, 525, 254], [572, 226, 648, 249], [565, 231, 607, 283], [655, 258, 626, 284], [528, 267, 603, 289],
];
const darkBonds = [[378, 180, 346, 215], [597, 180, 565, 215]];
const oBonds = [[293, 221, 326, 222], [410, 294, 446, 295], [501, 97, 533, 98], [617, 169, 652, 170]];

function Structure() {
  return (
    <svg viewBox="0 0 946 392" className="size-full block" role="img" aria-label="Crystal structure of V4O7">
      <defs>
        <radialGradient id="ball-V" cx=".42" cy=".32" r=".68">
          <stop offset="0" stopColor="#fff" /><stop offset=".35" stopColor="#dedede" />
          <stop offset=".75" stopColor="#b4b4b4" /><stop offset="1" stopColor="#6e6e6e" />
        </radialGradient>
        <radialGradient id="ball-O" cx=".42" cy=".32" r=".68">
          <stop offset="0" stopColor="#ff9a9a" /><stop offset=".2" stopColor="#ff1010" />
          <stop offset=".7" stopColor="#ee0000" /><stop offset="1" stopColor="#8c0000" />
        </radialGradient>
      </defs>
      <g fill="none" stroke="#fff" shapeRendering="crispEdges">
        <path d="M252 38H689L672 104H235ZM235 104L257 353H693L672 104M257 353L275 288M689 38L711 288L693 353" />
      </g>
      {oBack.map(([x, y]) => <circle key={x + "-" + y} cx={x} cy={y} r="9" fill="url(#ball-O)" />)}
      {vAtoms.map(([x, y]) => <circle key={x + "-" + y} cx={x} cy={y} r="13.700" fill="url(#ball-V)" />)}
      {bonds.map(([a, b, c, d]) => (
        <g key={a + "-" + b}>
          <line x1={a} y1={b} x2={c} y2={d} stroke="#c98507" strokeWidth="3" />
          <line x1={a} y1={b} x2={c} y2={d} stroke="#ffc02a" strokeWidth="1.500" />
        </g>
      ))}
      {darkBonds.map(([a, b, c, d]) => <line key={a} x1={a} y1={b} x2={c} y2={d} stroke="#8a5a06" strokeWidth="3" />)}
      {oBonds.map(([a, b, c, d]) => <line key={a} x1={a} y1={b} x2={c} y2={d} stroke="#c07f0c" strokeWidth="3" />)}
      {oFront.map(([x, y]) => <circle key={x} cx={x} cy={y} r="9" fill="url(#ball-O)" />)}
      <path d="M252 38L275 288H711" fill="none" stroke="#fff" shapeRendering="crispEdges" />
      <path d="M55 30L56 56H84" fill="none" stroke="#999" />
      <path d="M53 19l4 10h-7zM94 56l-12 3v-7z" fill="#fff" />
      <circle cx="53" cy="65" r="3.500" fill="#999" />
      <g fill="#d0d0d0" fontSize="12" fontFamily="Liberation Sans">
        <text x="48" y="13">b</text><text x="101" y="59">c</text><text x="48" y="84">a</text>
      </g>
    </svg>
  );
}

const sheetTabs = [
  ["2040764 :: Picture 1", "from-[#abd4f8] to-[#9cc3e6]"],
  ["2040765 :: Picture 1", "from-[#aadcc0] to-[#9accb0]"],
  ["452452 :: Picture 1", "from-[#f2df68] to-[#dfcb5c]"],
  ["452453 :: Picture 1", "from-[#d6bdf2] to-[#c9b0e4]"],
  ["455496 :: Picture 1", "from-[#abd4f8] to-[#9cc3e6]"],
  ["541662 :: Picture 1", "from-[#f2df68] to-[#dfcb5c]"],
  ["541670 :: Picture 1", "from-[#d6bdf2] to-[#c9b0e4]"],
];

function PicturePane() {
  return (
    <section className="flex-1 min-w-0 flex flex-col border-t border-l border-[#9a9a9a] bg-[#f2f2f2] font-['Liberation_Sans',Arial,sans-serif] text-[11px] text-black">
      <div className="h-7 shrink-0 flex items-end bg-linear-to-b from-[#f0f0f0] to-[#f6f6f6] border-b-4 border-[#a8cdb9]">
        <button aria-label="All pictures" className="w-6 h-full flex items-center justify-center text-[#6a6a6a]">
          <svg viewBox="0 0 10 8" className="w-[10px] h-2"><path d="M0 0h4v3H0zM6 0h4v3H6zM0 5h4v3H0zM6 5h4v3H6z" fill="currentColor" /></svg>
        </button>
        <button className="w-[150px] h-[22px] pt-px border border-b-0 border-[#8f8f8f] bg-linear-to-b from-[#c6ecd6] to-[#a9dfc2]">541661 :: Picture 1</button>
        <button aria-label="New picture" className="ml-[5px] w-[38px] h-5 flex items-center justify-between pl-[3px] pr-1 border border-b-0 border-[#9a9a9a] bg-[#e6e6e6]">
          <Icon name="picNew" />
          <Tri className="text-[#a0a0a0]" />
        </button>
        <button aria-label="More tabs" className="ml-auto mr-1 h-full flex items-center text-[#6a6a6a]">
          <svg viewBox="0 0 11 8" className="w-[11px] h-2"><path d="M1 0l4 4-4 4M6 0l4 4-4 4" fill="none" stroke="currentColor" strokeWidth="1.800" /></svg>
        </button>
      </div>
      <div className="relative flex-1 min-h-0 bg-black">
        <Structure />
        <div className="absolute right-0 bottom-0 w-[45px] h-[47px] border-2 border-[#808080] bg-black text-white text-[12px] flex flex-col justify-around">
          {["V", "O"].map((el) => (
            <div key={el} className="flex items-center">
              <svg viewBox="0 0 18 18" className="size-[18px] shrink-0"><circle cx="9" cy="9" r="9" fill={"url(#ball-" + el + ")"} /></svg>
              {el}+0
            </div>
          ))}
        </div>
      </div>
      <div className="h-7 shrink-0 flex items-stretch pt-[3px] pb-[3px] bg-white border-t border-[#b8b8b8] text-black">
        <button aria-label="Scroll rows" className="w-[15px] shrink-0 flex flex-col items-center justify-center gap-1 bg-[#f0f0f0] border border-[#b0b0b0]">
          <svg viewBox="0 0 8 5" className="w-2 h-[5px]"><path d="M0 5h8L4 0z" fill="#707070" /></svg>
          <svg viewBox="0 0 8 5" className="w-2 h-[5px]"><path d="M0 0h8L4 5z" fill="#707070" /></svg>
        </button>
        <button aria-label="Table" className="mx-[2px] w-[22px] shrink-0 flex items-center justify-center bg-[#f0f0f0] border border-[#b0b0b0]">
          <svg viewBox="0 0 10 8" className="w-[10px] h-2"><path d="M.5 .5h9v7h-9zM0 3.500h10M3.500 0v8M6.500 0v8" fill="none" stroke="#777" /></svg>
        </button>
        {sheetTabs.map(([t, c]) => (
          <button key={t} className="w-[119px] shrink-0 border border-[#a3a3a3] p-px">
            <span className={"block h-full leading-[17px] text-left pl-1 bg-linear-to-b " + c}>{t}</span>
          </button>
        ))}
        <button className="w-[30px] shrink-0 border border-[#a3a3a3] p-px">
          <span className="block h-full leading-[17px] text-left pl-1 bg-linear-to-b from-[#abd4f8] to-[#9cc3e6]">5...</span>
        </button>
        <div className="ml-auto w-[38px] flex items-center justify-around bg-[#f0f0f0] border-l border-[#b0b0b0]">
          <button aria-label="Previous tabs"><svg viewBox="0 0 5 9" className="w-[5px] h-[9px]"><path d="M5 0v9L0 4.500z" fill="#707070" /></svg></button>
          <button aria-label="Next tabs"><svg viewBox="0 0 5 9" className="w-[5px] h-[9px]"><path d="M0 0v9l5-4.500z" fill="#707070" /></svg></button>
        </div>
      </div>
    </section>
  );
}

/* ---------- data sheet ---------- */

function Group({ title, items, className }) {
  return (
    <div className={"w-[507px] " + className}>
      <h3 className="h-[15px] bg-[#a9e0c0] font-bold text-center">{title}</h3>
      <table className="mt-[6px] table-fixed border-separate border-spacing-0 w-full">
        <colgroup><col className="w-[92px]" /><col /></colgroup>
        <tbody>
          {items.map(([k, v]) => (
            <tr key={k}>
              <th className="h-4 pl-[3px] pr-0 py-0 bg-[#a9e0c0] border-b border-white text-left font-bold whitespace-nowrap">{k}</th>
              <td className="h-4 pl-[7px] py-0 pr-0 whitespace-nowrap">{v}</td>
            </tr>
          ))}
        </tbody>
      </table>
    </div>
  );
}

const atoms = [
  ["V(1)", "0.21437(7)", "0.14740(5)", "0.06317(3)"],
  ["V(2)", "0.22314(7)", "0.65454(5)", "0.06686(3)"],
  ["V(3)", "0.68224(6)", "0.44010(5)", "0.19969(3)"],
  ["V(4)", "0.68734(6)", "0.94206(5)", "0.20173(3)"],
  ["O(1)", "0.1014(3)", "0.8576(2)", "0.0150(1)"],
  ["O(2)", "0.5852(3)", "0.7954(2)", "0.0542(1)"],
  ["O(3)", "0.8547(3)", "0.4937(2)", "0.0835(1)"],
  ["O(4)", "0.3265(3)", "0.4356(2)", "0.1374(1)"],
];

function DataSheet() {
  const th = "h-[15px] p-0 bg-[#a9e0c0] border-r border-white font-bold";
  return (
    <section className="w-[622px] ml-[5px] mr-[3px] shrink-0 flex flex-col border border-[#8c8c8c] bg-white text-[11px] leading-[15px] text-black">
      <div className="h-[25px] shrink-0 flex items-center pl-[7px] pr-[3px] bg-[#f0f0f0] border-b border-[#a0a0a0]">
        <h2>Data sheet</h2>
        <span className="ml-2 mt-3"><Tri className="text-[#c0c0c0]" /></span>
        <button aria-label="Close data sheet" className="ml-auto text-[#555]"><X size={14} strokeWidth={3} /></button>
      </div>
      <div className="flex-1 min-h-0 flex border-b-[6px] border-[#f0f0f0]">
        <div className="flex-1 overflow-hidden pl-[11px] pt-4">
          <Group title="General" items={[["Origin", "541661"], ["Formula", "V4O7"]]} />
          <Group
            title="Bibliographic data"
            className="mt-4"
            items={[
              ["Author(s)", "Marezio M., McWhan D.B., Dernier P.D., Remeika J.P."],
              ["Publication title", "Structural Aspects of the Metal-Insulator Transition in V4O7"],
              ["Citation", "Journal of Solid State Chemistry, 6, 419-429 (1973)"],
            ]}
          />
          <Group
            title="Phase data"
            className="mt-4"
            items={[
              ["Space-group", "A1- (2) - triclinic"],
              [
                "Cell",
                <p className="leading-[17px]">
                  a=5.509(1) Å b=7.008(1) Å c=12.258(2) Å α=95.09(1)° β=95.19(1)° γ=109.21(1)°<br />
                  V=441.52(13) Å<sup>3</sup>
                </p>,
              ],
            ]}
          />
          <div className="w-[306px] mt-4">
            <h3 className="h-[15px] bg-[#a9e0c0] font-bold text-center">Atomic parameters</h3>
            <table className="mt-[6px] table-fixed w-full border-separate border-spacing-0 whitespace-nowrap">
              <colgroup>
                <col className="w-[36px]" /><col className="w-[24px]" /><col className="w-[39px]" /><col className="w-[27px]" />
                <col className="w-[60px]" /><col className="w-[60px]" /><col className="w-[60px]" />
              </colgroup>
              <thead>
                <tr>
                  {["Atom", "Ox.", "Wyck.", "Site", "x/a", "y/b", "z/c"].map((h) => <th key={h} className={th}>{h}</th>)}
                </tr>
              </thead>
              <tbody>
                {atoms.map(([a, x, y, z]) => (
                  <tr key={a}>
                    <td className="h-4 p-0 pl-[6px]">{a}</td>
                    <td className="h-4 p-0 pl-[6px]">0</td>
                    <td className="h-4 p-0 pl-[6px]">4i</td>
                    <td className="h-4 p-0 pl-[6px]">1</td>
                    <td className="h-4 p-0 pl-[6px]">{x}</td>
                    <td className="h-4 p-0 pl-[6px]">{y}</td>
                    <td className="h-4 p-0 pl-[6px]">{z}</td>
                  </tr>
                ))}
              </tbody>
            </table>
          </div>
        </div>
        <div className="w-4 shrink-0 bg-[#f0f0f0] flex flex-col items-center py-[13px] text-[#505050]">
          <ChevronUp size={16} strokeWidth={4} />
          <div className="mt-[5px] w-[15px] h-[299px] bg-[#cdcdcd]" />
          <ChevronDown size={16} strokeWidth={4} className="mt-auto" />
        </div>
      </div>
    </section>
  );
}

function StatusBar() {
  const cell = "h-[17px] border-l border-[#dfe5ee] flex items-center pl-[5px] whitespace-nowrap ";
  return (
    <footer className="h-5 shrink-0 flex items-center pt-px bg-[#2a3a57] text-white text-[12px]">
      <span className="pl-[3px] flex-1">For Help, press F1</span>
      <div className={cell + "w-[102px]"} />
      <div className={cell + "w-[28px]"} />
      <div className={cell + "w-[28px]"} />
      <div className={cell + "w-[28px]"} />
      <div className="h-[17px] w-[172px] border-l border-[#dfe5ee] pl-[2px] flex items-center">
        <select aria-label="Mode" className="appearance-none w-[98px] h-4 leading-4 px-[2px] bg-[#bcc7d9] text-[#111]">
          <option>Manual</option>
        </select>
        <svg viewBox="0 0 14 14" className="size-[14px] ml-[6px] mr-[2px]" aria-hidden="true">
          <path d="M.5 .5h13v13H.5z" fill="#164020" stroke="#ddd" strokeDasharray="2 1.500" />
          <path d="M7 0l3 4H4zM7 14l3-4H4zM0 7l4-3v6zM14 7l-4-3v6zM5 5h4v4H5z" fill="#1fd01f" />
        </svg>
        <span className="text-[11px]">0.94131</span>
      </div>
      <div className={cell + "w-[43px]"} />
      <div className={cell + "w-[72px]"}>11 parms</div>
      <div className={cell + "w-[71px]"}>46 atoms</div>
      <div className={cell + "w-[71px]"}>26 bonds</div>
      <div className={cell + "w-[64px]"}>polymeric</div>
      <div className={cell + "w-[64px]"}>0 polyh.</div>
    </footer>
  );
}

export default function App() {
  return (
    <div className={"h-screen flex flex-col overflow-hidden bg-[#9ba9c2] " + ui}>
      <TitleBar />
      <MenuBar />
      <div className="flex h-[27px] shrink-0"><Toolbar items={mainTools} label="Main" /></div>
      <main className="flex-1 min-h-0 flex">
        <PictureCreator />
        <div className="flex-1 min-w-0 flex flex-col border-l border-[#c3cad4] bg-[#f0f0f0]">
          <StructureList />
          <div className="flex-1 min-h-0 flex mt-1">
            <PicturePane />
            <DataSheet />
          </div>
        </div>
      </main>
      <div className="flex gap-[2px] h-[26px] shrink-0">
        <Toolbar items={buildTools} label="Build" />
        <Toolbar items={moveTools} active="arrow" label="Move" />
        <Toolbar items={measureTools} label="Measure" />
      </div>
      <StatusBar />
    </div>
  );
}
